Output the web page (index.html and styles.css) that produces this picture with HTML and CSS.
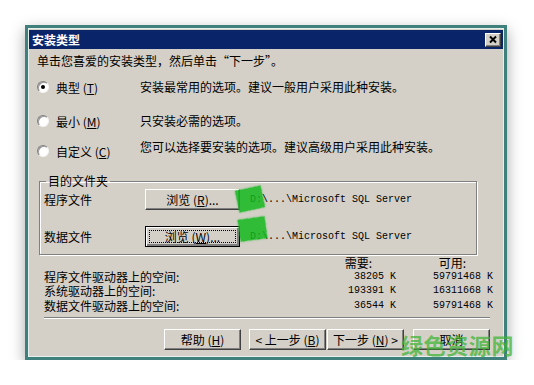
FILE: index.html
```html
<!DOCTYPE html>
<html lang="zh-CN">
<head>
  <meta charset="UTF-8" />
  <title>安装类型</title>
  <link rel="stylesheet" href="styles.css">
</head>
<body>
  <div class="dialog">
    <div class="titlebar">
      <span>安装类型</span>
      <span class="close">
        <svg width="14" height="12" viewBox="0 0 14 12"><path d="M4 2.5 L10 8.5 M10 2.5 L4 8.5" stroke="#000" stroke-width="2" fill="none"/></svg>
      </span>
    </div>

    <div class="content">
      <p class="intro">单击您喜爱的安装类型，然后单击“下一步”。</p>

      <div class="options">
        <div class="opt"><span class="radio checked"></span><span class="opt-label">典型 (<u>T</u>)</span></div>
        <div class="opt-desc">安装最常用的选项。建议一般用户采用此种安装。</div>
        <div class="opt"><span class="radio"></span><span class="opt-label">最小 (<u>M</u>)</span></div>
        <div class="opt-desc">只安装必需的选项。</div>
        <div class="opt low"><span class="radio"></span><span class="opt-label">自定义 (<u>C</u>)</span></div>
        <div class="opt-desc">您可以选择要安装的选项。建议高级用户采用此种安装。</div>
      </div>

      <fieldset class="dest">
        <legend>目的文件夹</legend>
        <div class="dest-row">
          <span class="dest-label">程序文件</span>
          <button class="btn browse">浏览 (<u>R</u>)...</button>
          <span class="path">D:\...\Microsoft SQL Server</span>
        </div>
        <div class="dest-row second">
          <span class="dest-label">数据文件</span>
          <button class="btn browse default">浏览 (<u>W</u>)...</button>
          <span class="path">D:\...\Microsoft SQL Server</span>
        </div>
      </fieldset>

      <div class="space">
        <span></span>
        <span class="head need">需要:</span>
        <span class="head avail">可用:</span>

        <span>程序文件驱动器上的空间:</span>
        <span class="num">38205 K</span>
        <span class="num">59791468 K</span>

        <span>系统驱动器上的空间:</span>
        <span class="num">193391 K</span>
        <span class="num">16311668 K</span>

        <span>数据文件驱动器上的空间:</span>
        <span class="num">36544 K</span>
        <span class="num">59791468 K</span>
      </div>

      <hr class="sep">

      <div class="buttons">
        <button class="btn help">帮助 (<u>H</u>)</button>
        <button class="btn">&lt; 上一步 (<u>B</u>)</button>
        <button class="btn">下一步 (<u>N</u>) &gt;</button>
        <button class="btn cancel">取消</button>
      </div>
    </div>

    <div class="blob one"></div>
    <div class="blob two"></div>

    <div class="watermark">
      <span class="wm-title">绿色资源网</span>
      <span class="wm-url">www.downcc.com</span>
    </div>
  </div>
</body>
</html>
```

FILE: styles.css
```css
* {
  margin: 0;
  padding: 0;
  box-sizing: border-box;
}
body {
  background: #fff;
  font-family: "Noto Sans CJK SC", sans-serif;
  font-size: 12px;
  color: #000;
}
.dialog {
  position: relative;
  width: 482px;
  height: 335px;
  margin: 25px 0 0 25px;
  background: #d4d0c8;
  border: 3px solid #3f7f7c;
  padding: 2px 1px 1px;
  box-shadow: 0 5px 14px rgba(0, 0, 0, 0.35), inset 0 0 0 1px #e6efec;
}
.titlebar {
  height: 19px;
  background: #0a246a;
  color: #fff;
  font-weight: bold;
  line-height: 19px;
  display: flex;
  justify-content: space-between;
  align-items: center;
  padding: 0 2px 0 3px;
}
.close {
  width: 16px;
  height: 14px;
  background: #d4d0c8;
  border: 1px solid;
  border-color: #fff #404040 #404040 #fff;
  box-shadow: inset -1px -1px #808080;
  display: flex;
  align-items: center;
  justify-content: center;
}
.content {
  padding: 5px 13px 0 8px;
}
.intro {
  line-height: 14px;
}

/* options */
.options {
  margin-top: 9px;
  display: grid;
  grid-template-columns: 103px 1fr;
  grid-template-rows: 20px 34px 26px;
  align-items: end;
}
.opt {
  display: flex;
  align-items: center;
  height: 20px;
}
.opt.low {
  height: 18px;
  margin-bottom: -3px;
}
.opt-desc {
  line-height: 20px;
}
.opt-label {
  margin-left: 7px;
}
.radio {
  position: relative;
  width: 12px;
  height: 12px;
  border-radius: 50%;
  background: #fff;
  border: 1px solid;
  border-color: #808080 #f4f4f4 #f4f4f4 #808080;
  box-shadow: inset 1px 1px #9a9a9a;
  flex-shrink: 0;
}
.radio.checked::after {
  content: "";
  position: absolute;
  left: 3px;
  top: 3px;
  width: 4px;
  height: 4px;
  border-radius: 50%;
  background: #000;
}

/* destination folder */
.dest {
  margin: 17px 0 0 2px;
  width: 438px;
  border: 1px solid #808080;
  box-shadow: 1px 1px 0 #fff, inset 1px 1px 0 #fff;
  padding: 1px 4px 7px 4px;
}
.dest legend {
  margin-left: 2px;
  padding: 0 2px;
  line-height: 14px;
}
.dest-row {
  display: flex;
  align-items: center;
  height: 21px;
}
.dest-row.second {
  margin-top: 16px;
}
.dest-label {
  width: 101px;
}
.path {
  margin-left: 10px;
  font-family: "Liberation Mono", monospace;
  font-size: 10px;
}

/* buttons */
.btn {
  width: 77px;
  height: 21px;
  background: #d4d0c8;
  border: 1px solid;
  border-color: #fff #404040 #404040 #fff;
  box-shadow: inset -1px -1px #808080;
  font-family: "Noto Sans CJK SC", sans-serif;
  font-size: 12px;
  color: #000;
  display: flex;
  align-items: center;
  justify-content: center;
}
.btn.browse {
  width: 95px;
}
.btn.default {
  border: 1px solid #000;
  box-shadow: inset 1px 1px #fff, inset -2px -2px #808080, inset -1px -1px #404040;
  outline: 1px dotted #000;
  outline-offset: -5px;
}

/* disk space */
.space {
  margin: 1px -3px 0 7px;
  display: grid;
  grid-template-columns: 1fr 60px 97px;
  grid-template-rows: 14px 14px 14px 15px;
  align-items: end;
  line-height: 14px;
}
.head.need {
  text-align: right;
  padding-right: 24px;
}
.head.avail {
  text-align: right;
  padding-right: 27px;
}
.num {
  text-align: right;
  font-family: "Liberation Mono", monospace;
  font-size: 10px;
}
.sep {
  margin: 4px 0 0 7px;
  border: none;
  border-top: 1px solid #808080;
  border-bottom: 1px solid #fff;
}
.buttons {
  margin-top: 10px;
  display: flex;
  justify-content: flex-end;
  gap: 1px;
}
.btn.help {
  margin-right: 7px;
}
.btn.cancel {
  margin-left: 8px;
}

/* overlays */
.blob {
  position: absolute;
  height: 22px;
  background: rgba(20, 185, 30, 0.85);
  box-shadow: 0 0 2px rgba(20, 185, 30, 0.8);
}
.blob.one {
  left: 209px;
  top: 160px;
  width: 26px;
  transform: rotate(-12deg);
}
.blob.two {
  left: 211px;
  top: 190px;
  width: 27px;
  transform: rotate(-8deg);
}
.watermark {
  position: absolute;
  z-index: 5;
  left: 373px;
  top: 305px;
  display: flex;
  flex-direction: column;
  gap: 5px;
  white-space: nowrap;
}
.wm-title {
  font-size: 22px;
  line-height: 22px;
  font-weight: bold;
  letter-spacing: 0.6px;
  color: rgba(60, 180, 50, 0.72);
}
.wm-url {
  font-family: "Liberation Sans", "DejaVu Sans", sans-serif;
  font-size: 14px;
  line-height: 14px;
  color: #5cb454;
}
```
